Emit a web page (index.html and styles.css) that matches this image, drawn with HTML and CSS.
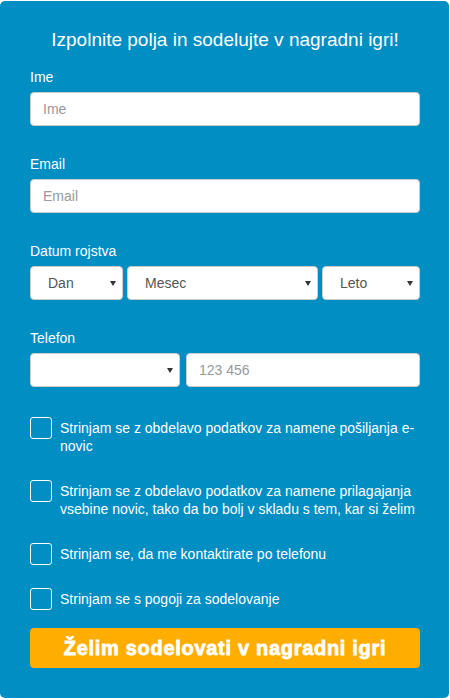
FILE: index.html
```html
<!DOCTYPE html>
<html lang="sl">
<head>
<meta charset="utf-8">
<link rel="stylesheet" href="styles.css">
</head>
<body>
<form class="card">
  <h1 class="title">Izpolnite polja in sodelujte v nagradni igri!</h1>

  <div class="field">
    <label class="label">Ime</label>
    <input class="input" type="text" placeholder="Ime">
  </div>

  <div class="field">
    <label class="label">Email</label>
    <input class="input" type="text" placeholder="Email">
  </div>

  <div class="field">
    <label class="label">Datum rojstva</label>
    <div class="row date-row">
      <div class="select sel-day"><span>Dan</span></div>
      <div class="select sel-month"><span>Mesec</span></div>
      <div class="select sel-year"><span>Leto</span></div>
    </div>
  </div>

  <div class="field">
    <label class="label">Telefon</label>
    <div class="row phone-row">
      <div class="select sel-prefix"><span></span></div>
      <input class="input phone-input" type="text" placeholder="123 456">
    </div>
  </div>

  <div class="checks">
    <div class="check"><span class="box"></span><span class="check-text">Strinjam se z obdelavo podatkov za namene pošiljanja e-novic</span></div>
    <div class="check"><span class="box"></span><span class="check-text">Strinjam se z obdelavo podatkov za namene prilagajanja vsebine novic, tako da bo bolj v skladu s tem, kar si želim</span></div>
    <div class="check"><span class="box"></span><span class="check-text">Strinjam se, da me kontaktirate po telefonu</span></div>
    <div class="check"><span class="box"></span><span class="check-text">Strinjam se s pogoji za sodelovanje</span></div>
  </div>

  <button class="submit" type="button">Želim sodelovati v nagradni igri</button>
</form>
</body>
</html>
```
FILE: styles.css
```css
* { box-sizing: border-box; }
html, body { margin: 0; padding: 0; background: #fff; }
body {
  font-family: "Liberation Sans", Arial, sans-serif;
  padding-top: 1px;
}
.card {
  width: 449px;
  height: 697px;
  background: #008ec3;
  border-radius: 5px;
  padding: 27px 29px 30px 30px;
  display: flex;
  flex-direction: column;
}
.title {
  margin: 0 0 15px 0;
  font-size: 19px;
  font-weight: normal;
  line-height: 24px;
  color: #fff;
  text-align: center;
}
.field {
  display: flex;
  flex-direction: column;
  margin-bottom: 28px;
}
.label {
  color: #fff;
  font-size: 14px;
  line-height: 20px;
  margin-bottom: 5px;
}
.input {
  height: 34px;
  width: 100%;
  border: 1px solid #ccc;
  border-radius: 4px;
  background: #fff;
  padding: 0 12px;
  font-family: inherit;
  font-size: 14px;
  color: #555;
  outline: none;
}
.input::placeholder { color: #999; }
.row { display: flex; }
.date-row { gap: 4px; }
.phone-row { gap: 6px; }
.select {
  position: relative;
  height: 34px;
  border: 1px solid #ccc;
  border-radius: 4px;
  background: #fff;
  padding: 0 17px;
  font-size: 14px;
  line-height: 32px;
  color: #555;
}
.select::after {
  content: "";
  position: absolute;
  right: 6px;
  top: 14px;
  border-left: 3px solid transparent;
  border-right: 3px solid transparent;
  border-top: 5px solid #333;
}
.sel-day { width: 93px; flex: none; }
.sel-month { width: 191px; flex: none; }
.sel-year { flex: 1; }
.sel-prefix { width: 150px; flex: none; }
.phone-input { flex: 1; width: auto; }

.checks {
  display: flex;
  flex-direction: column;
  margin-top: 2px;
}
.check {
  display: flex;
  align-items: flex-start;
  gap: 8px;
  margin-bottom: 25px;
}
.check:nth-child(3) { margin-bottom: 23px; }
.check:last-child { margin-bottom: 0; }
.box {
  flex: none;
  width: 22px;
  height: 22px;
  border: 1px solid #fff;
  border-radius: 3px;
}
.check-text {
  color: #fff;
  font-size: 14px;
  line-height: 18px;
  padding-top: 2px;
}
.submit {
  margin-top: 18px;
  height: 40px;
  width: 100%;
  background: #ffae00;
  border: none;
  border-radius: 4px;
  color: #fff;
  font-family: "Liberation Sans", Arial, sans-serif;
  font-weight: bold;
  font-size: 20px;
  -webkit-text-stroke: 0.8px #fff;
  letter-spacing: 0.7px;
  padding: 0;
}
```
